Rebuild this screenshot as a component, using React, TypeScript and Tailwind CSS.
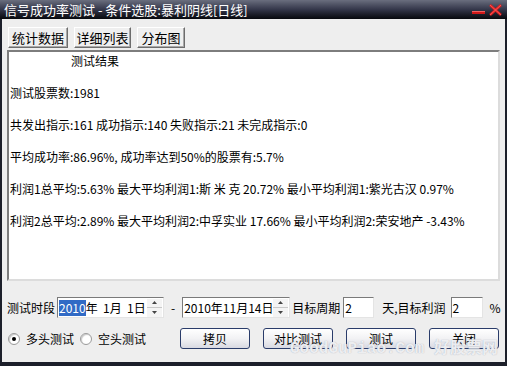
const cjk = "font-['Noto_Sans_CJK_SC','Noto_Sans_CJK_TC',sans-serif]";

function Spin() {
  return (
    <div className="flex flex-col w-[15px] h-[18px] ml-auto">
      <div className="flex-1 flex items-center justify-center bg-[#f4f4f4] border-b border-[#c8c8c8]">
        <svg width="5" height="3" viewBox="0 0 5 3"><path d="M0 3 L2.5 0 L5 3 Z" fill="#444" /></svg>
      </div>
      <div className="flex-1 flex items-center justify-center bg-[#f4f4f4]">
        <svg width="5" height="3" viewBox="0 0 5 3"><path d="M0 0 L2.5 3 L5 0 Z" fill="#444" /></svg>
      </div>
    </div>
  );
}

function Field({ w, children }: { w: string; children: React.ReactNode }) {
  return (
    <div
      className={`${w} h-[21px] flex items-center bg-white border border-t-[#7a7a7a] border-l-[#7a7a7a] border-r-[#e4e4e4] border-b-[#e4e4e4] pl-[1px] pr-[1px] text-[12px] leading-[16px]`}
    >
      {children}
    </div>
  );
}

function Btn({ label }: { label: string }) {
  return (
    <button className="w-[70px] h-[21px] rounded-[3px] border border-[#2a3c6a] bg-gradient-to-b from-white via-[#f2f2f4] to-[#d8d9e2] text-[12px] leading-[16px] text-black">
      {label}
    </button>
  );
}

function Tab({ label, w }: { label: string; w: string }) {
  return (
    <div
      className={`${w} h-[21px] flex items-center justify-center bg-[#efefef] border border-t-white border-l-white border-r-[#6d6d6d] border-b-[#6d6d6d] shadow-[inset_-1px_-1px_0_#a8a8a8] text-[13px] leading-[16px]`}
    >
      {label}
    </div>
  );
}

function Radio({ checked, label }: { checked?: boolean; label: string }) {
  return (
    <label className="flex items-center gap-[6px]">
      <span className="w-[12px] h-[12px] rounded-full bg-white border border-[#9a9a9a] flex items-center justify-center shadow-[inset_1px_1px_1px_#c8c8c8]">
        {checked && <span className="w-[4px] h-[4px] rounded-full bg-black" />}
      </span>
      <span className="text-[12px] leading-[16px]">{label}</span>
    </label>
  );
}

export default function App() {
  const lines = [
    "测试股票数:1981",
    "共发出指示:161 成功指示:140 失败指示:21 未完成指示:0",
    "平均成功率:86.96%, 成功率达到50%的股票有:5.7%",
    "利润1总平均:5.63% 最大平均利润1:斯 米 克 20.72% 最小平均利润1:紫光古汉 0.97%",
    "利润2总平均:2.89% 最大平均利润2:中孚实业 17.66% 最小平均利润2:荣安地产 -3.43%",
  ];

  return (
    <div className={`relative w-[507px] h-[366px] flex flex-col bg-[#1c1f2a] text-black ${cjk}`}>
      {/* title bar */}
      <div className="h-[19px] flex items-center px-[4px] bg-gradient-to-b from-[#6a6e7e] via-[#34374a] to-[#08090e]">
        <span className="text-white text-[13px] leading-[16px] whitespace-nowrap">
          信号成功率测试 - 条件选股:暴利阴线[日线]
        </span>
        <div className="ml-auto flex items-center gap-[4px] pr-[1px]">
          <svg width="13" height="12" viewBox="0 0 13 12">
            <rect x="0" y="7" width="13" height="3" fill="#d01818" />
            <rect x="0" y="7" width="13" height="1" fill="#f06060" />
          </svg>
          <svg width="13" height="12" viewBox="0 0 13 12">
            <path d="M1 1 L12 11 M12 1 L1 11" stroke="#e01c1c" strokeWidth="2.4" />
            <path d="M1 1 L12 11 M12 1 L1 11" stroke="#ff8080" strokeWidth="0.6" />
          </svg>
        </div>
      </div>

      {/* body */}
      <div className="flex-1 mx-[2px] mb-[4px] bg-[#eeeeee] flex flex-col px-[5px]">
        <div className="flex gap-[6px] mt-[8px] ml-[1px]">
          <Tab label="统计数据" w="w-[60px]" />
          <Tab label="详细列表" w="w-[57px]" />
          <Tab label="分布图" w="w-[48px]" />
        </div>

        <div className="mt-[2px] h-[231px] bg-white border-2 border-t-[#7d7d7d] border-l-[#7d7d7d] border-r-[#dcdcdc] border-b-[#dcdcdc] pl-[1px] pt-[1px]">
          <div className="flex flex-col gap-[16px] text-[12px] leading-[16px] whitespace-nowrap">
            <div className="pl-[61px]">测试结果</div>
            {lines.map((l) => (
              <div key={l}>{l}</div>
            ))}
          </div>
        </div>

        {/* period row */}
        <div className="flex items-center mt-[16px] text-[12px] leading-[16px] whitespace-nowrap">
          <span>测试时段</span>
          <div className="ml-[2px]">
            <Field w="w-[107px]">
              <span className="bg-[#316ac5] text-white">2010</span>
              <span>年&nbsp;&nbsp;1月&nbsp;&nbsp;1日</span>
              <Spin />
            </Field>
          </div>
          <span className="mx-[7px]">-</span>
          <Field w="w-[108px]">
            <span>2010年11月14日</span>
            <Spin />
          </Field>
          <span className="ml-[2px]">目标周期</span>
          <div className="ml-[3px]">
            <Field w="w-[31px]">
              <span>2</span>
            </Field>
          </div>
          <span className="ml-[8px]">天,目标利润</span>
          <div className="ml-[5px]">
            <Field w="w-[32px]">
              <span>2</span>
            </Field>
          </div>
          <span className="ml-[7px]">%</span>
        </div>

        {/* action row */}
        <div className="flex items-center mt-[10px]">
          <div className="flex items-center gap-[6px] ml-[1px]">
            <Radio checked label="多头测试" />
            <Radio label="空头测试" />
          </div>
          <div className="flex gap-[13px] ml-[34px]">
            <Btn label="拷贝" />
            <Btn label="对比测试" />
            <Btn label="测试" />
            <Btn label="关闭" />
          </div>
        </div>
      </div>

      {/* watermark */}
      <div className="absolute left-[290px] top-[340px] text-[16px] leading-[18px] font-bold text-white/80 font-['Liberation_Mono','Noto_Sans_CJK_SC',monospace] whitespace-nowrap [text-shadow:0_0_1px_#9aa0b0]">
        GoodGuPiao.Com 好股票网
      </div>
    </div>
  );
}
